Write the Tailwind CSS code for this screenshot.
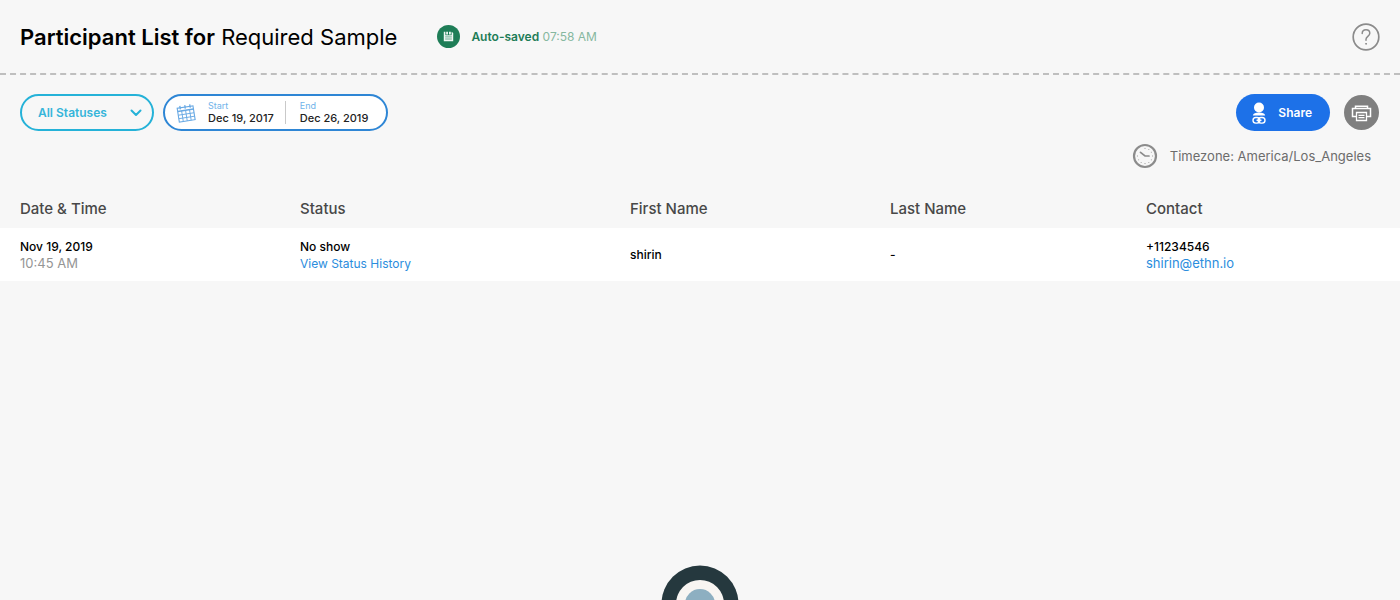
<!DOCTYPE html>
<html lang="en">
<head>
<meta charset="utf-8">
<meta name="viewport" content="width=device-width, initial-scale=1">
<title>Participant List</title>
<script src="https://cdn.jsdelivr.net/npm/@tailwindcss/browser@4"></script>
</head>
<body class="flex min-h-screen flex-col bg-[#f7f7f7] font-['Inter',sans-serif] text-black">
  <header class="flex h-[75px] items-center border-b-2 border-dashed border-[#bfbfbf] px-5">
    <h1 class="text-[22px] leading-8"><span class="font-semibold">Participant List for</span> Required Sample</h1>
    <div class="ml-10 flex items-center gap-[11px] text-xs">
      <svg class="size-[23px]" viewBox="0 0 22 22" aria-hidden="true">
        <circle cx="11" cy="11" r="11" fill="#1e7d57"/>
        <path d="M6.500 6.500h1.500v3.200h6V6.500l1.500 1.200v7.800h-9z" fill="#f0f8f4"/>
        <path d="M8.800 6.500h1.700V9H8.800zM11.500 6.500h1.700V9h-1.700z" fill="#f0f8f4"/>
        <path d="M7.800 11.400h6.400M7.800 13.400h6.400" stroke="#1e7d57" stroke-width=".6"/>
      </svg>
      <p class="text-[#86b8a0]"><span class="font-semibold text-[#1e7d57]">Auto-saved</span> 07:58 AM</p>
    </div>
    <button type="button" aria-label="Help" class="ml-auto">
      <svg class="size-7" viewBox="0 0 28 28" fill="none" stroke="#8b8b8b" stroke-linecap="round">
        <circle cx="14" cy="14" r="12.800" stroke-width="1.700"/>
        <path d="M10.200 10.600c0-2.400 1.600-3.800 3.800-3.800s3.800 1.400 3.800 3.500c0 3-3.800 3.200-3.800 6v1" stroke-width="1.500"/>
        <circle cx="14" cy="20.800" r=".5" fill="#8b8b8b" stroke-width=".9"/>
      </svg>
    </button>
  </header>

  <main>
    <div class="flex items-center px-5 pt-[19px]">
      <div class="relative">
        <select aria-label="Status" class="h-[37px] w-[134px] appearance-none rounded-full border-2 border-[#25b2d8] pl-4 text-xs font-semibold text-[#35b5da]">
          <option>All Statuses</option>
        </select>
        <svg class="pointer-events-none absolute top-[15px] right-3 h-2 w-3" viewBox="0 0 12 8" fill="none" stroke="#25b2d8" stroke-width="2" stroke-linecap="round" stroke-linejoin="round" aria-hidden="true"><path d="M1.500 1.500 6 6l4.500-4.500"/></svg>
      </div>
      <button type="button" class="ml-[9px] flex h-[37px] items-center rounded-full border-2 border-[#2e86d5] bg-white pr-[18px] pl-[11px] text-left">
        <svg class="size-5" viewBox="0 0 20 20" fill="none" stroke="#68a9e4" aria-hidden="true">
          <g transform="rotate(-9 10 10)">
            <path d="M2 4h16v14H2z" stroke-width="1.100"/>
            <path d="M2 7.300h16" stroke-width="1.500"/>
            <path d="M2 11h16M2 14.500h16M6 7v11M10 7v11M14 7v11" stroke-width=".9"/>
            <path d="M5 2v3.500M10 2v3.500M15 2v3.500" stroke-width="1.300"/>
          </g>
        </svg>
        <span class="ml-3 flex flex-col pr-[11px] pb-px">
          <span class="text-[9px] leading-3 text-[#71b3ea]">Start</span>
          <span class="text-[11px] leading-[13px] font-medium text-[#222]">Dec 19, 2017</span>
        </span>
        <span class="h-[23px] w-px bg-[#c9c9c9]"></span>
        <span class="ml-[14px] flex flex-col pb-px">
          <span class="text-[9px] leading-3 text-[#71b3ea]">End</span>
          <span class="text-[11px] leading-[13px] font-medium text-[#222]">Dec 26, 2019</span>
        </span>
      </button>
      <button type="button" class="ml-auto flex h-[37px] items-center gap-[10px] rounded-full bg-[#1d71e8] pr-[18px] pl-[14px] text-xs font-semibold text-white">
        <svg class="h-6 w-[18px]" viewBox="0 0 18 24" aria-hidden="true">
          <circle cx="9" cy="6.500" r="5" fill="#fff"/>
          <path d="M2.800 14.600c.6-2.600 2.700-3.200 6.200-3.200s5.600.6 6.200 3.200z" fill="#fff"/>
          <g fill="none" stroke="#fff" stroke-width="1.400"><rect x="3" y="16.500" width="6.800" height="5.600" rx="2.800"/><rect x="8.200" y="16.500" width="6.800" height="5.600" rx="2.800"/><path d="M6.500 19.300h5"/></g>
        </svg>
        Share
      </button>
      <button type="button" aria-label="Print" class="mr-px ml-[14px]">
        <svg class="size-[35px]" viewBox="0 0 35 35" fill="none" stroke="#fff" stroke-width="1.500" aria-hidden="true">
          <circle cx="17.500" cy="17.500" r="17.500" fill="#7f7f7f" stroke="none"/>
          <path d="M11.500 13.500v-2.300h12v2.300M12 21.500H8.500v-8h18v8H23"/>
          <path d="M12.500 17.500h10v8h-10zM14.500 20.300h6M14.500 22.700h6" stroke-width="1.300"/>
        </svg>
      </button>
    </div>

    <div class="flex items-center justify-end gap-3 pt-3 pr-[29px]">
      <svg class="size-[26px]" viewBox="0 0 26 26" fill="none" stroke="#8c8c8c" stroke-linecap="round" aria-hidden="true">
        <circle cx="13" cy="13" r="11" stroke-width="2.200"/>
        <path d="M8.500 9.300 13 13h4" stroke-width="1.700"/>
        <path d="M13 5.300v.3M13 20.400v.3M5.300 13h.3M20.400 13h.3M16.800 6.500v.1M19.400 9.200v.1M19.400 16.800v.1M16.800 19.400v.1M9.200 19.400v.1M6.600 16.800v.1" stroke-width=".8"/>
      </svg>
      <p class="text-[13px] leading-5 text-[#6c6c6c]">Timezone: America/Los_Angeles</p>
    </div>

    <table class="mt-5 w-full table-fixed text-left text-xs leading-[17px] font-medium">
      <colgroup><col class="w-[20%]"><col class="w-[24%]"><col class="w-[18%]"><col class="w-[18%]"><col></colgroup>
      <thead class="text-[15px] text-[#484848]">
        <tr class="h-[39px]">
          <th scope="col" class="pl-5 font-medium">Date &amp; Time</th>
          <th scope="col" class="pl-5 font-medium">Status</th>
          <th scope="col" class="pl-[14px] font-medium">First Name</th>
          <th scope="col" class="pl-[22px] font-medium">Last Name</th>
          <th scope="col" class="pl-[26px] font-medium">Contact</th>
        </tr>
      </thead>
      <tbody>
        <tr class="h-[53px] bg-white">
          <td class="pl-5"><p>Nov 19, 2019</p><p class="text-[13px] font-normal text-[#959595]">10:45 AM</p></td>
          <td class="pl-5"><p>No show</p><a href="#history" class="block font-normal text-[#2b8ddd]">View Status History</a></td>
          <td class="pl-[14px]">shirin</td>
          <td class="pl-[22px]">-</td>
          <td class="pl-[26px]"><p>+11234546</p><a href="mailto:shirin@ethn.io" class="block text-[13px] font-normal text-[#2b8ddd]">shirin@ethn.io</a></td>
        </tr>
      </tbody>
    </table>
  </main>

  <footer class="mt-auto flex h-[35px] justify-center overflow-hidden">
    <svg class="size-[78px] shrink-0" viewBox="0 0 78 78" aria-hidden="true">
      <circle cx="39" cy="39" r="38.500" fill="#25383e"/>
      <circle cx="39" cy="39" r="24" fill="#f8f5f2"/>
      <circle cx="39" cy="39" r="15" fill="#8dafc1"/>
    </svg>
  </footer>
</body>
</html>
